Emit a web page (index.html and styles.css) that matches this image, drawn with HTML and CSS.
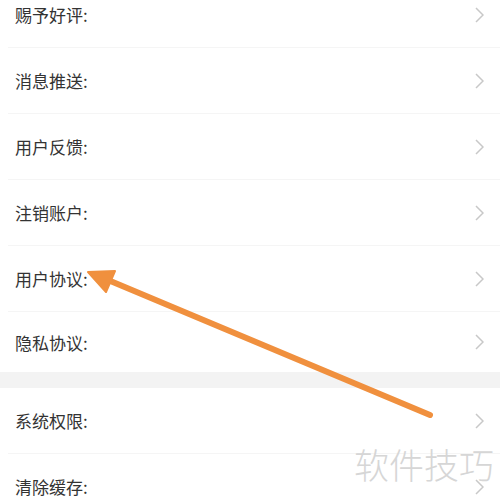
FILE: index.html
```html
<!DOCTYPE html>
<html lang="zh-CN">
<head>
<meta charset="utf-8">
<link rel="stylesheet" href="styles.css">
</head>
<body>
<div class="page">
  <div class="group first">
    <div class="row"><span class="label">赐予好评:</span><svg class="chev" viewBox="0 0 9 16"><polyline points="1,1 8,8 1,15"/></svg></div>
    <div class="row"><span class="label">消息推送:</span><svg class="chev" viewBox="0 0 9 16"><polyline points="1,1 8,8 1,15"/></svg></div>
    <div class="row"><span class="label">用户反馈:</span><svg class="chev" viewBox="0 0 9 16"><polyline points="1,1 8,8 1,15"/></svg></div>
    <div class="row"><span class="label">注销账户:</span><svg class="chev" viewBox="0 0 9 16"><polyline points="1,1 8,8 1,15"/></svg></div>
    <div class="row"><span class="label">用户协议:</span><svg class="chev" viewBox="0 0 9 16"><polyline points="1,1 8,8 1,15"/></svg></div>
    <div class="row last"><span class="label">隐私协议:</span><svg class="chev" viewBox="0 0 9 16"><polyline points="1,1 8,8 1,15"/></svg></div>
  </div>
  <div class="band"></div>
  <div class="group">
    <div class="row"><span class="label">系统权限:</span><svg class="chev" viewBox="0 0 9 16"><polyline points="1,1 8,8 1,15"/></svg></div>
    <div class="row"><span class="label">清除缓存:</span><svg class="chev" viewBox="0 0 9 16"><polyline points="1,1 8,8 1,15"/></svg></div>
  </div>
  <svg class="arrow" viewBox="0 0 500 500" width="500" height="500">
    <line x1="430" y1="415" x2="108" y2="280" stroke="#f0903e" stroke-width="6" stroke-linecap="round"/>
    <polygon points="88,272 115,271 106,292" fill="#f0903e" stroke="#f0903e" stroke-width="2" stroke-linejoin="round"/>
  </svg>
  <div class="watermark">软件技巧</div>
</div>
</body>
</html>
```

FILE: styles.css
```css
html, body {
  margin: 0;
  padding: 0;
  background: #ffffff;
}
.page {
  position: relative;
  width: 500px;
  height: 500px;
  overflow: hidden;
  font-family: "Noto Sans CJK SC", "Noto Sans", sans-serif;
}
.group.first {
  margin-top: -18px;
}
.row {
  height: 66px;
  box-sizing: border-box;
  margin-left: 8px;
  padding: 0 16px 0 7px;
  display: flex;
  align-items: center;
  justify-content: space-between;
  border-bottom: 1px solid #f5f5f5;
}
.row.last {
  border-bottom: none;
  height: 60px;
}
.label {
  font-size: 17px;
  color: #333333;
}
.chev {
  width: 9px;
  height: 16px;
  fill: none;
  stroke: #c8c8c8;
  stroke-width: 1.5;
}
.band {
  height: 16px;
  background: #f3f3f3;
}
.arrow {
  position: absolute;
  left: 0;
  top: 0;
}
.watermark {
  position: absolute;
  left: 354px;
  top: 440px;
  font-size: 35px;
  line-height: 48px;
  color: #d6d6d6;
  font-family: "Noto Sans CJK SC", sans-serif;
  font-weight: 300;
}
```
